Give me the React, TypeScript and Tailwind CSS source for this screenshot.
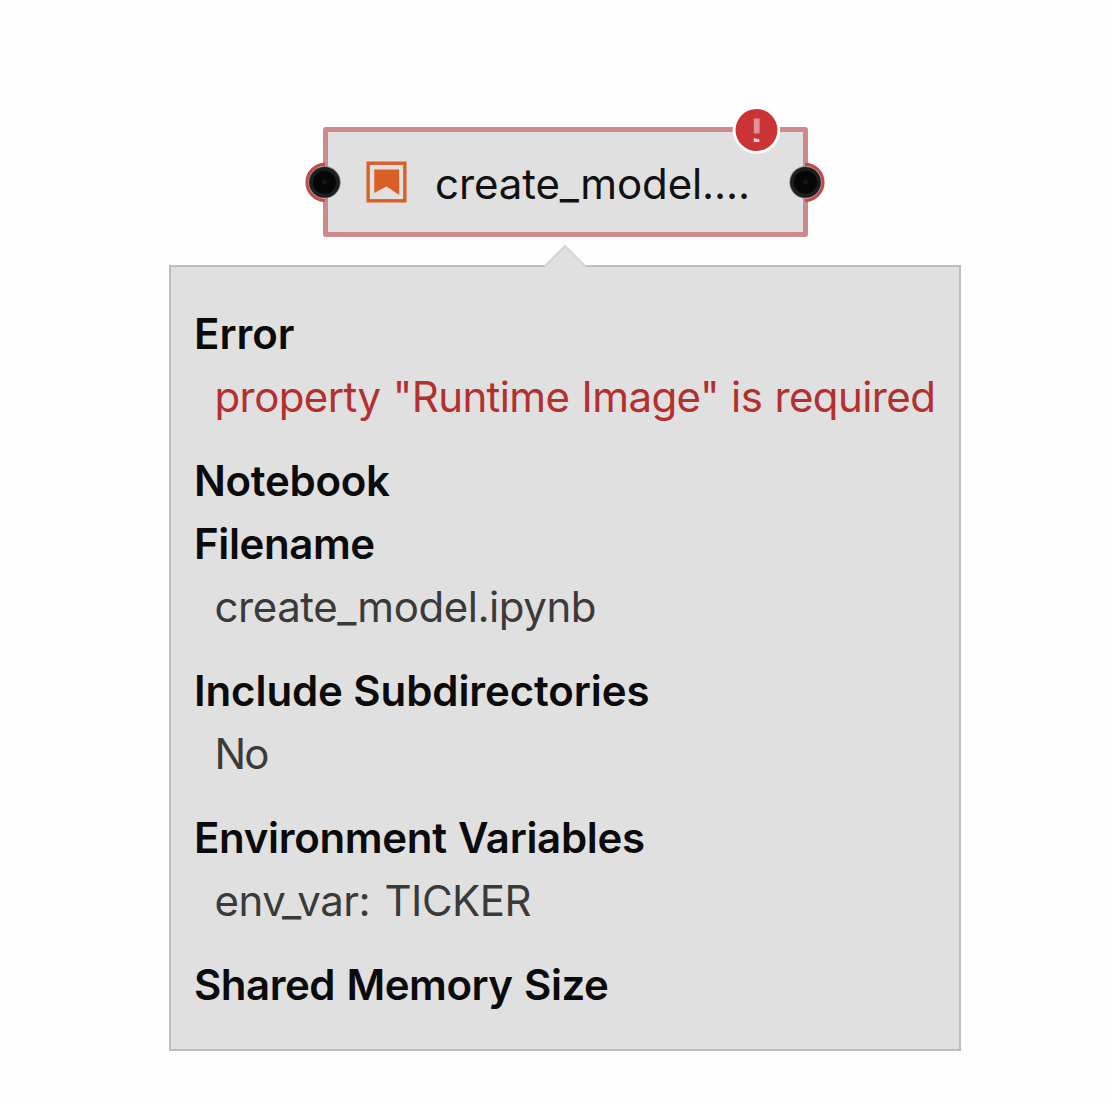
import React from "react";

type Line = { text: string; tracking: string };

type Property = {
  label: Line[];
  value?: Line;
  valueClass?: string;
};

const properties: Property[] = [
  {
    label: [{ text: "Error", tracking: "tracking-normal" }],
    value: { text: 'property "Runtime Image" is required', tracking: "tracking-[-0.6px] [word-spacing:1px]" },
    valueClass: "text-[#b3302f]",
  },
  {
    label: [
      { text: "Notebook", tracking: "tracking-[-0.3px]" },
      { text: "Filename", tracking: "tracking-[-0.4px]" },
    ],
    value: { text: "create_model.ipynb", tracking: "tracking-[-0.45px]" },
  },
  {
    label: [{ text: "Include Subdirectories", tracking: "tracking-[-0.1px]" }],
    value: { text: "No", tracking: "tracking-[-2px]" },
  },
  {
    label: [{ text: "Environment Variables", tracking: "tracking-[-0.32px] [word-spacing:1px]" }],
    value: { text: "env_var: TICKER", tracking: "tracking-[-0.5px] [word-spacing:3px]" },
  },
  { label: [{ text: "Shared Memory Size", tracking: "tracking-[-0.5px] [word-spacing:1.5px]" }] },
];

function Port({ side }: { side: "left" | "right" }) {
  const place = side === "left" ? "-left-[25px]" : "-right-[24px] -scale-x-100";
  return (
    <svg className={`absolute top-[29px] h-[42px] w-[42px] ${place}`} viewBox="0 0 42 42">
      <path d="M22 3.300A18 18 0 0 0 22 39.300" fill="#fff" stroke="#c4484c" strokeWidth="3.200" />
      <circle cx="21.500" cy="21.300" r="16.200" fill="#8a8a8a" />
      <circle cx="21.500" cy="21.300" r="15.400" fill="#1e1e1e" />
      <circle cx="21.500" cy="21.300" r="11.500" fill="#060606" />
      <circle cx="21.500" cy="21.300" r="2.500" fill="#161616" />
    </svg>
  );
}

function NotebookIcon() {
  return (
    <svg className="h-[42px] w-[41px] shrink-0" viewBox="0 0 42 42" preserveAspectRatio="none">
      <rect x="2.200" y="2.200" width="37.600" height="37.600" fill="none" stroke="#da5f25" strokeWidth="3.400" />
      <path d="M8.500 8.500H34V34L21 25.500L8.500 32Z" fill="#da5f25" />
    </svg>
  );
}

function ErrorBadge() {
  return (
    <svg className="absolute left-[404px] -top-[26px] h-[48px] w-[48px]" viewBox="0 0 48 48">
      <circle cx="24.500" cy="24" r="23.800" fill="#fff" />
      <circle cx="24.500" cy="24" r="21" fill="#cb3434" />
      <rect x="21.800" y="12.500" width="5.800" height="15" fill="#e2929a" />
      <path d="M21.800 32L27.400 33.500V36H21.800Z" fill="#f6d5d8" />
    </svg>
  );
}

function PipelineNode() {
  return (
    <div className="relative ml-[323px] flex h-[110px] w-[485px] items-center rounded-[3px] border-[5px] border-[#cd8a8d] bg-[#e0e0e0] pl-[38px]">
      <NotebookIcon />
      <span className="ml-[28px] whitespace-nowrap pt-[2px] text-[42px] leading-[63px] tracking-[-0.1px] text-[#111]">create_model....</span>
      <Port side="left" />
      <Port side="right" />
      <ErrorBadge />
    </div>
  );
}

function Tooltip() {
  return (
    <div className="relative ml-[169px] mt-[28px] flex h-[786px] w-[792px] flex-col gap-[21px] border-[2px] border-[#bdbdbd] bg-[#e0e0e0] pl-[23px] pt-[35px]">
      <svg className="absolute left-[372px] -top-[23px] h-[25px] w-[44px]" viewBox="0 0 44 25">
        <path d="M0 25L22 2L44 25Z" fill="#e0e0e0" />
        <path d="M1 23L22 2L43 23" fill="none" stroke="#d4d4d4" strokeWidth="2" />
      </svg>
      {properties.map((p) => (
        <div key={p.label[0].text} className="flex flex-col items-start whitespace-nowrap text-[42px] leading-[63px]">
          {p.label.map((l) => (
            <span key={l.text} className={`font-semibold text-[#0b0b0b] ${l.tracking}`}>{l.text}</span>
          ))}
          {p.value && (
            <span className={`ml-[20.500px] ${p.value.tracking} ${p.valueClass ?? "text-[#3a3a3a]"}`}>{p.value.text}</span>
          )}
        </div>
      ))}
    </div>
  );
}

export default function App() {
  return (
    <main className="h-[1102px] w-[1106px] overflow-hidden bg-[#fefefe] pt-[127px] font-['Inter',sans-serif]">
      <PipelineNode />
      <Tooltip />
    </main>
  );
}
